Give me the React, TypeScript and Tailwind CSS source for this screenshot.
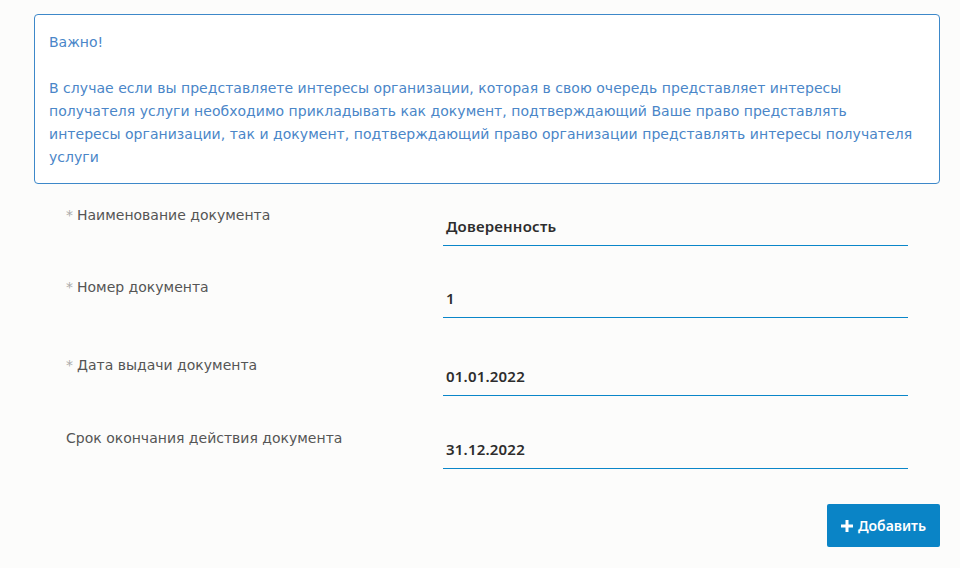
import React from "react";

const rows = [
  { label: "Наименование документа", req: true, value: "Доверенность", h: "h-[72px]" },
  { label: "Номер документа", req: true, value: "1", h: "h-[78px]" },
  { label: "Дата выдачи документа", req: true, value: "01.01.2022", h: "h-[73px]" },
  { label: "Срок окончания действия документа", req: false, value: "31.12.2022", h: "h-[76px]" },
];

const lines = [
  "В случае если вы представляете интересы организации, которая в свою очередь представляет интересы",
  "получателя услуги необходимо прикладывать как документ, подтверждающий Ваше право представлять",
  "интересы организации, так и документ, подтверждающий право организации представлять интересы получателя",
  "услуги",
];

export default function App() {
  return (
    <div className="min-h-[568px] w-full bg-[#fcfcfb] pl-[34px] pr-[20px] pt-[14px] text-[14px]" style={{ fontFamily: '"DejaVu Sans", "Noto Sans", sans-serif' }}>
      <div className="rounded-[4px] border border-[#3d88c9] bg-white px-[14px] pt-[16px] pb-[14px] leading-[23px] text-[#4a86c8]">
        <p>Важно!</p>
        <p>&nbsp;</p>
        <p>
          {lines.map((l) => (
            <span key={l} className="block whitespace-nowrap tracking-[0.03px]">{l}</span>
          ))}
        </p>
      </div>
      <div className="px-[32px] pt-[21px]">
        {rows.map((r) => (
          <div key={r.label} className={`flex ${r.h}`}>
            <div className="w-[377px] text-[14px] leading-[20px] text-[#555]">
              {r.req && <span className="mr-[4px] text-[#aaa]">*</span>}
              {r.label}
            </div>
            <div className="flex-1 pt-[11px]">
              <div
                className="border-b border-b-[#0a86c9] pb-[9px] pl-[3px] text-[15px] font-semibold leading-[20px] tracking-[0.2px] text-[#2d2d2d]"
                style={{ fontFamily: '"Noto Sans", sans-serif' }}
              >
                {r.value}
              </div>
            </div>
          </div>
        ))}
      </div>
      <div className="flex justify-end">
        <button
          className="flex h-[43px] items-center gap-[5px] rounded-[2px] bg-[#0a84c6] px-[14px] text-[14px] font-semibold text-white"
          style={{ fontFamily: '"Noto Sans", sans-serif' }}
        >
          <svg width="12" height="12" viewBox="0 0 12 12"><path d="M4.5 0h3v4.5H12v3H7.5V12h-3V7.5H0v-3h4.5z" fill="white" /></svg>
          Добавить
        </button>
      </div>
    </div>
  );
}
